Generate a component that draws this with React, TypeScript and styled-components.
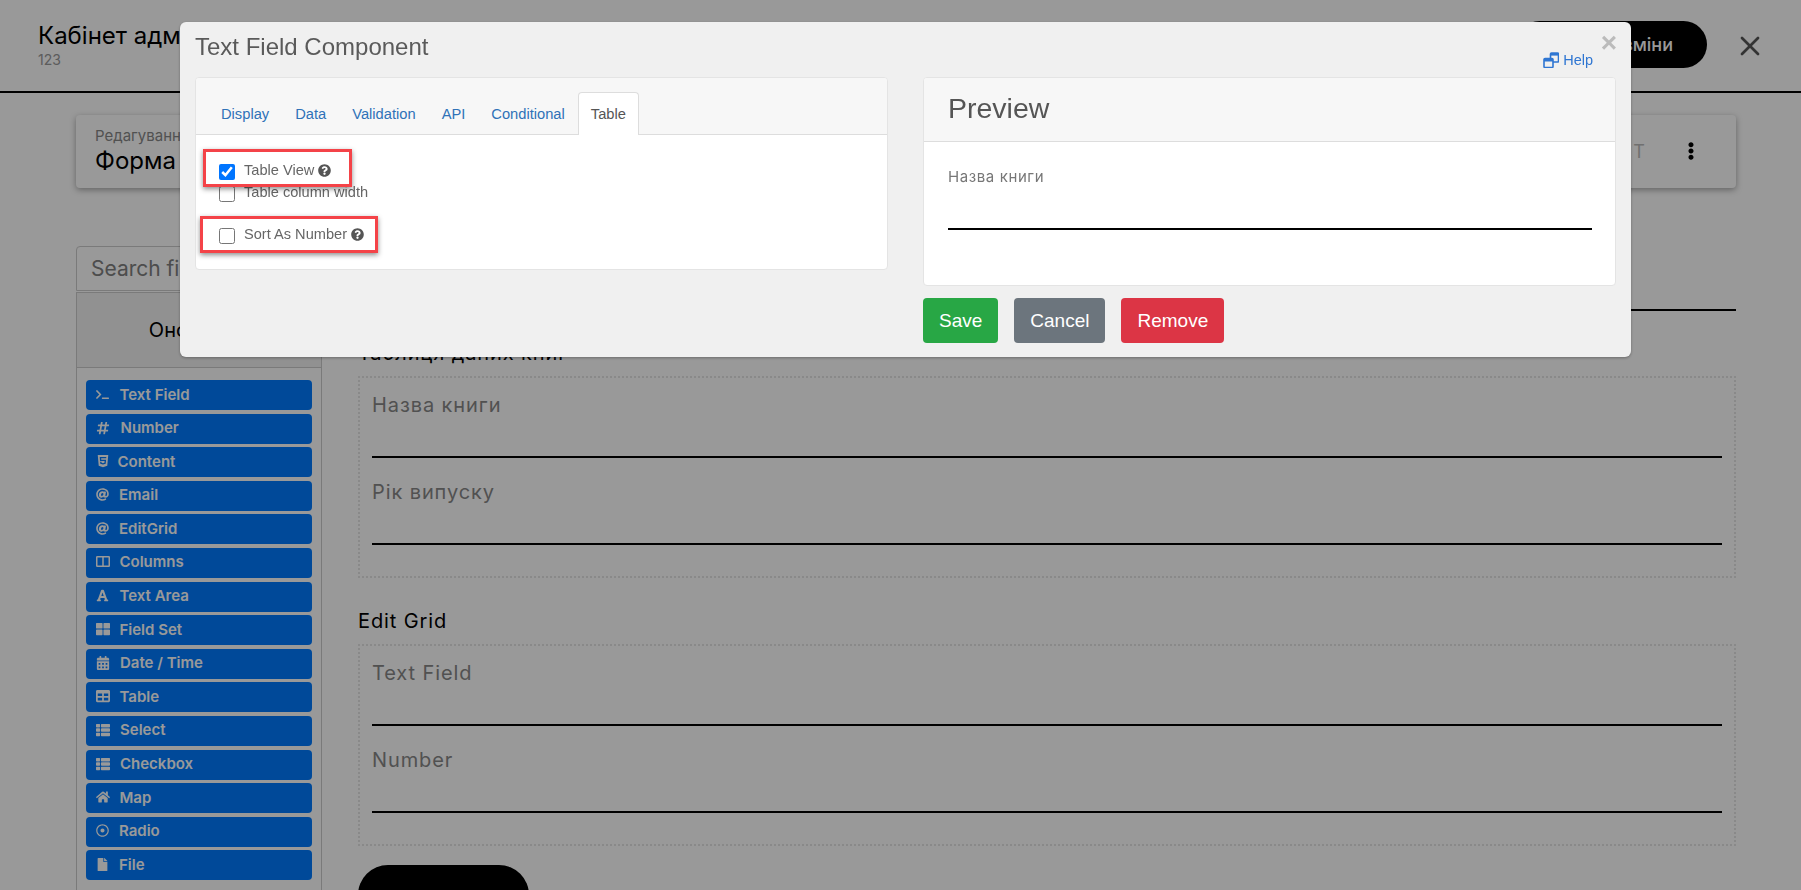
import * as React from 'react';
import styled, { createGlobalStyle } from 'styled-components';
import {
  FaAt,
  FaCalendarAlt,
  FaEllipsisV,
  FaFile,
  FaFont,
  FaHashtag,
  FaHome,
  FaHtml5,
  FaQuestionCircle,
  FaRegDotCircle,
  FaTable,
  FaTerminal,
  FaThLarge,
  FaThList,
} from 'react-icons/fa';
import { X } from 'lucide-react';

const GlobalStyle = createGlobalStyle`
  html, body {
    margin: 0;
    height: 100%;
    overflow: hidden;
    background: #fff;
    font-family: Inter, "Noto Sans", sans-serif;
  }
  * { box-sizing: border-box; }
`;

const Page = styled.div`
  width: 1801px;
  height: 890px;
  overflow: hidden;
`;

const Header = styled.header`
  height: 93px;
  border-bottom: 2px solid #000;
  padding: 21px 35px 0 38px;
  display: flex;
  justify-content: space-between;
`;

const HeaderTitle = styled.div`
  font-size: 24px;
  line-height: 30px;
  color: #000;
`;

const HeaderSub = styled.div`
  font-size: 14px;
  line-height: 18px;
  color: #999;
`;

const HeaderActions = styled.div`
  display: flex;
  align-items: flex-start;
  gap: 27px;
`;

const SaveButton = styled.button`
  width: 191px;
  height: 47px;
  border: none;
  border-radius: 24px;
  background: #000;
  color: #fff;
  font: 500 18px Inter, sans-serif;
  text-align: right;
  padding: 0 34px 0 0;
`;

const CloseIcon = styled(X)`
  width: 32px;
  height: 32px;
  color: #555;
  margin-top: 9px;
`;

const Content = styled.main`
  padding: 22px 65px 0 76px;
`;

const FormCard = styled.section`
  height: 73px;
  border-radius: 4px;
  box-shadow: 0 2px 6px rgba(0, 0, 0, 0.35);
  padding: 11px 36px 0 19px;
  display: flex;
  justify-content: space-between;
`;

const CardCaption = styled.div`
  font-size: 15px;
  line-height: 20px;
  color: #888;
`;

const CardTitle = styled.div`
  font-size: 24px;
  line-height: 30px;
  color: #000;
`;

const CardActions = styled.div`
  display: flex;
  align-items: center;
  gap: 35px;
  height: 50px;
  color: #bbb;
  font-size: 18px;
  letter-spacing: 2px;

  svg {
    color: #000;
  }
`;

const Workspace = styled.div`
  display: flex;
  gap: 36px;
  margin-top: 58px;
`;

const Sidebar = styled.aside`
  width: 246px;
  flex: none;
`;

const SearchInput = styled.input`
  width: 100%;
  height: 45px;
  display: block;
  border: 1px solid #ccc;
  border-radius: 4px 4px 0 0;
  padding: 0 14px;
  font: 21px Inter, sans-serif;

  &::placeholder {
    color: #808080;
  }
`;

const GroupTitle = styled.div`
  height: 76px;
  margin-top: 1px;
  padding-left: 8px;
  background: #f2f2f2;
  border: 1px solid #ccc;
  display: flex;
  align-items: center;
  justify-content: center;
  font-size: 20px;
  color: #000;
`;

const PaletteList = styled.div`
  display: flex;
  flex-direction: column;
  gap: 3.6px;
  padding: 12px 9px 20px;
  border: 1px solid #ccc;
  border-top: none;
`;

const PaletteButton = styled.div`
  height: 30px;
  flex: none;
  border-radius: 4px;
  background: #007bff;
  color: #fff;
  display: flex;
  align-items: center;
  padding: 0 0 2px 10px;
  font-size: 15px;
  font-weight: 600;
`;

const PaletteIcon = styled.span<{ $slot: number }>`
  width: ${(p) => p.$slot}px;
  flex: none;
  display: flex;
  align-items: center;
`;

const MainColumn = styled.div`
  flex: 1;
  min-width: 0;
`;

const TopField = styled.div`
  height: 65px;
  border-bottom: 2px solid #000;
`;

const SectionTitle = styled.div<{ $top: number }>`
  height: 28px;
  line-height: 28px;
  font-size: 20px;
  letter-spacing: 0.9px;
  color: #000;
  margin: ${(p) => p.$top}px 0 9px;
`;

const DottedBox = styled.div`
  height: 202px;
  border: 2px dotted #e4e4e4;
  padding: 13px 12px 0;
`;

const BoxField = styled.div`
  height: 67px;
  border-bottom: 2px solid #000;
  margin-bottom: 20px;
`;

const BoxLabel = styled.div`
  font-size: 20px;
  line-height: 28px;
  letter-spacing: 0.9px;
  color: #888;
`;

const SubmitButton = styled.div`
  width: 171px;
  height: 60px;
  margin-top: 19px;
  border-radius: 30px;
  background: #000;
`;

const Backdrop = styled.div`
  position: fixed;
  inset: 0;
  background: rgba(0, 0, 0, 0.4);
`;

const Modal = styled.div`
  position: absolute;
  left: 180px;
  top: 22px;
  width: 1451px;
  height: 335px;
  padding: 0 15px;
  border-radius: 6px;
  background: #f0f0f0;
  box-shadow: 0 1px 3px rgba(0, 0, 0, 0.3);
  font-family: "Liberation Sans", Arial, sans-serif;
`;

const ModalClose = styled.span`
  position: absolute;
  right: 14px;
  top: 5px;
  font-size: 28px;
  line-height: 32px;
  font-weight: 700;
  color: #bbb;
`;

const ModalHeader = styled.div`
  height: 55px;
  display: flex;
  justify-content: space-between;
  align-items: flex-start;
`;

const ModalTitle = styled.h2`
  margin: 11px 0 0;
  font-size: 24px;
  line-height: 28px;
  font-weight: 400;
  color: #5a5a5a;
`;

const HelpLink = styled.a`
  margin: 30px 23px 0 0;
  display: flex;
  align-items: center;
  gap: 4px;
  font-size: 14.5px;
  line-height: 16px;
  color: #2f76d2;
`;

const ModalColumns = styled.div`
  display: flex;
  gap: 35px;
`;

const TabsColumn = styled.div`
  width: 693px;
  flex: none;
`;

const PreviewColumn = styled.div`
  flex: 1;
  min-width: 0;
`;

const Panel = styled.div`
  border: 1px solid #e4e4e4;
  border-radius: 4px;
  background: #fff;
  overflow: hidden;
`;

const TabBar = styled.div`
  height: 57px;
  padding: 14px 12px 0;
  display: flex;
  background: #f7f7f7;
  border-bottom: 1px solid #ddd;
`;

const Tab = styled.div<{ $active?: boolean }>`
  height: 43px;
  padding: 0 12px;
  border: 1px solid ${(p) => (p.$active ? '#ddd' : 'transparent')};
  border-bottom: none;
  border-radius: 4px 4px 0 0;
  background: ${(p) => (p.$active ? '#fff' : 'transparent')};
  color: ${(p) => (p.$active ? '#555' : '#2f72b8')};
  font-size: 14.7px;
  line-height: 43px;
`;

const TabBody = styled.div`
  position: relative;
  height: 134px;
  padding: 25px 23px;
`;

const CheckRow = styled.label<{ $gap?: number }>`
  display: flex;
  align-items: flex-start;
  gap: 9px;
  height: 22px;
  margin-top: ${(p) => p.$gap ?? 0}px;
  font-size: 14.6px;
  line-height: 20px;
  color: #666;
`;

const CheckInput = styled.input`
  width: 16px;
  height: 16px;
  margin: 4px 0 0;
  flex: none;
  accent-color: #0075ff;
`;

const Hint = styled(FaQuestionCircle)`
  width: 13px;
  height: 13px;
  margin-left: 4px;
  vertical-align: -2px;
  color: #555;
`;

const RedFrame = styled.div<{ $left: number; $top: number; $w: number; $h: number }>`
  position: absolute;
  left: ${(p) => p.$left}px;
  top: ${(p) => p.$top}px;
  width: ${(p) => p.$w}px;
  height: ${(p) => p.$h}px;
  border: 3px solid #f44348;
  box-shadow: 0 2px 5px rgba(0, 0, 0, 0.45);
`;

const PreviewHeader = styled.div`
  height: 64px;
  padding-left: 24px;
  background: #f7f7f7;
  border-bottom: 1px solid #ddd;
  font-size: 28.5px;
  line-height: 60px;
  color: #555;
`;

const PreviewBody = styled.div`
  height: 143px;
  padding: 25px 23px 0 24px;
`;

const PreviewLabel = styled.div`
  font-family: Inter, sans-serif;
  font-size: 15px;
  line-height: 20px;
  letter-spacing: 0.6px;
  color: #777;
`;

const PreviewLine = styled.div`
  height: 2px;
  margin-top: 41px;
  background: #000;
`;

const ButtonRow = styled.div`
  display: flex;
  gap: 16px;
  margin-top: 12px;
`;

const ActionButton = styled.button<{ $bg: string }>`
  height: 45px;
  padding: 0 16px;
  border: none;
  border-radius: 4px;
  background: ${(p) => p.$bg};
  color: #fff;
  font: 19px "Liberation Sans", Arial, sans-serif;
`;

const ColumnsIcon = () => (
  <svg width="14" height="13" viewBox="0 0 14 13" fill="none" stroke="currentColor" strokeWidth="1.5">
    <rect x="0.75" y="1.75" width="12.5" height="9.5" rx="0.5" />
    <path d="M7 1.75v9.5" />
  </svg>
);

const HelpIcon = () => (
  <svg width="16" height="16" viewBox="0 0 16 16" fill="none" stroke="currentColor">
    <rect x="7.5" y="1" width="8" height="9" rx="1" strokeWidth="1.6" />
    <rect x="1" y="6.5" width="9" height="9" rx="1" fill="#f0f0f0" strokeWidth="1.6" />
    <rect x="1" y="6.5" width="9" height="3" fill="currentColor" stroke="none" />
    <rect x="7.5" y="1" width="8" height="2.6" fill="currentColor" stroke="none" />
  </svg>
);

const palette = [
  { label: 'Text Field', icon: <FaTerminal size={13} />, slot: 23.5 },
  { label: 'Number', icon: <FaHashtag size={14} />, slot: 24.5 },
  { label: 'Content', icon: <FaHtml5 size={14} />, slot: 21.5 },
  { label: 'Email', icon: <FaAt size={13} />, slot: 23 },
  { label: 'EditGrid', icon: <FaAt size={13} />, slot: 23 },
  { label: 'Columns', icon: <ColumnsIcon />, slot: 23.5 },
  { label: 'Text Area', icon: <FaFont size={13} />, slot: 23.5 },
  { label: 'Field Set', icon: <FaThLarge size={14} />, slot: 23.5 },
  { label: 'Date / Time', icon: <FaCalendarAlt size={14} />, slot: 24 },
  { label: 'Table', icon: <FaTable size={14} />, slot: 23.5 },
  { label: 'Select', icon: <FaThList size={14} />, slot: 24 },
  { label: 'Checkbox', icon: <FaThList size={14} />, slot: 24 },
  { label: 'Map', icon: <FaHome size={14} />, slot: 23.5 },
  { label: 'Radio', icon: <FaRegDotCircle size={13} />, slot: 23 },
  { label: 'File', icon: <FaFile size={13} />, slot: 23 },
];

const tabs = ['Display', 'Data', 'Validation', 'API', 'Conditional', 'Table'];

export default function App() {
  return (
    <Page>
      <GlobalStyle />
      <Header>
        <div>
          <HeaderTitle>Кабінет адміністратора</HeaderTitle>
          <HeaderSub>123</HeaderSub>
        </div>
        <HeaderActions>
          <SaveButton>Зберегти зміни</SaveButton>
          <CloseIcon />
        </HeaderActions>
      </Header>

      <Content>
        <FormCard>
          <div>
            <CardCaption>Редагування форми</CardCaption>
            <CardTitle>Форма книги</CardTitle>
          </div>
          <CardActions>
            ЕКСПОРТ
            <FaEllipsisV size={18} />
          </CardActions>
        </FormCard>

        <Workspace>
          <Sidebar>
            <SearchInput placeholder="Search field(s)" readOnly />
            <GroupTitle>Оновлення</GroupTitle>
            <PaletteList>
              {palette.map((item) => (
                <PaletteButton key={item.label}>
                  <PaletteIcon $slot={item.slot}>{item.icon}</PaletteIcon>
                  {item.label}
                </PaletteButton>
              ))}
            </PaletteList>
          </Sidebar>

          <MainColumn>
            <TopField />
            <SectionTitle $top={28}>Таблиця даних книг</SectionTitle>
            <DottedBox>
              <BoxField><BoxLabel>Назва книги</BoxLabel></BoxField>
              <BoxField><BoxLabel>Рік випуску</BoxLabel></BoxField>
            </DottedBox>
            <SectionTitle $top={29}>Edit Grid</SectionTitle>
            <DottedBox>
              <BoxField><BoxLabel>Text Field</BoxLabel></BoxField>
              <BoxField><BoxLabel>Number</BoxLabel></BoxField>
            </DottedBox>
            <SubmitButton />
          </MainColumn>
        </Workspace>
      </Content>

      <Backdrop>
        <Modal>
          <ModalClose>×</ModalClose>
          <ModalHeader>
            <ModalTitle>Text Field Component</ModalTitle>
            <HelpLink>
              <HelpIcon />
              Help
            </HelpLink>
          </ModalHeader>
          <ModalColumns>
            <TabsColumn>
              <Panel>
                <TabBar>
                  {tabs.map((t) => (
                    <Tab key={t} $active={t === 'Table'}>{t}</Tab>
                  ))}
                </TabBar>
                <TabBody>
                  <CheckRow>
                    <CheckInput type="checkbox" defaultChecked />
                    <span>Table View<Hint /></span>
                  </CheckRow>
                  <CheckRow>
                    <CheckInput type="checkbox" />
                    <span>Table column width</span>
                  </CheckRow>
                  <CheckRow $gap={20}>
                    <CheckInput type="checkbox" />
                    <span>Sort As Number<Hint /></span>
                  </CheckRow>
                  <RedFrame $left={7} $top={14} $w={149} $h={38} />
                  <RedFrame $left={4} $top={81} $w={178} $h={37} />
                </TabBody>
              </Panel>
            </TabsColumn>
            <PreviewColumn>
              <Panel>
                <PreviewHeader>Preview</PreviewHeader>
                <PreviewBody>
                  <PreviewLabel>Назва книги</PreviewLabel>
                  <PreviewLine />
                </PreviewBody>
              </Panel>
              <ButtonRow>
                <ActionButton $bg="#28a745">Save</ActionButton>
                <ActionButton $bg="#6c757d">Cancel</ActionButton>
                <ActionButton $bg="#dc3545">Remove</ActionButton>
              </ButtonRow>
            </PreviewColumn>
          </ModalColumns>
        </Modal>
      </Backdrop>
    </Page>
  );
}
